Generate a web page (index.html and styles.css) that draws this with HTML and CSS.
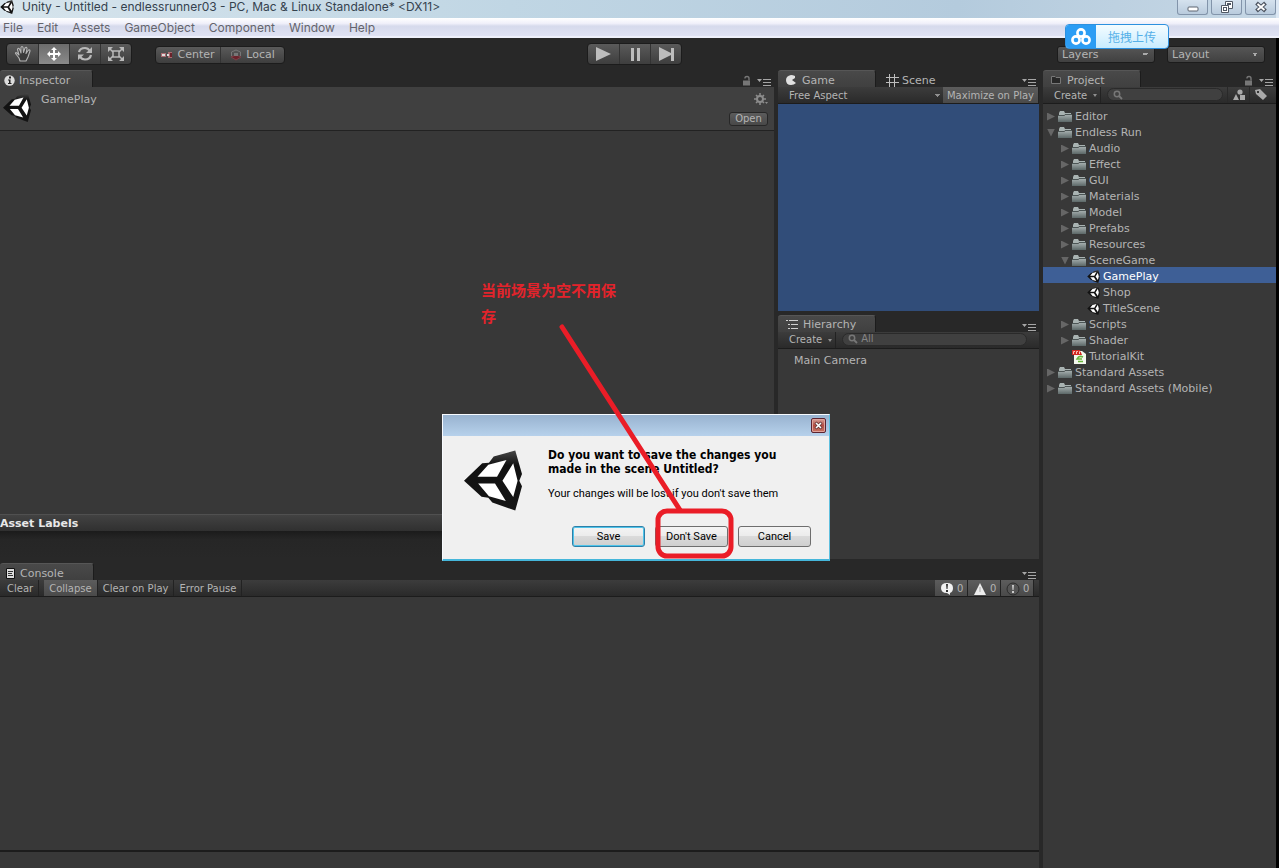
FILE: index.html
```html
<!DOCTYPE html>
<html lang="en">
<head>
<meta charset="utf-8">
<title>Unity - Untitled - endlessrunner03</title>
<link rel="stylesheet" href="styles.css">
</head>
<body>
<svg class="defs" aria-hidden="true">
  <defs>
    <linearGradient id="edge" x1="0" y1="0" x2="0" y2="1"><stop offset="0" stop-color="#484848"/><stop offset=".25" stop-color="#111"/><stop offset="1" stop-color="#151515"/></linearGradient>
    <linearGradient id="fold" x1="0" y1="0" x2="0" y2="1"><stop offset="0" stop-color="#a4adad"/><stop offset="1" stop-color="#5c6868"/></linearGradient>
    <symbol id="unity" viewBox="0 0 172 178">
      <path fill="url(#edge)" d="M0 90 54 38 74 36 88 18 152 0 172 70 164 90 172 106 152 178 84 154 72 140 52 137Z"/>
      <path fill="#fff" d="M40 78 72 42 126 28 98 78ZM42 98H92L124 150 74 136ZM146 38 159 90 146 138 114 90Z"/>
    </symbol>
    <symbol id="folder" viewBox="0 0 14 12">
      <path fill="#a9b3b2" d="M1 2 2 0H6L7 2H13V4H1Z"/><path fill="url(#fold)" d="M0 5H6L7 4H14V11H0Z"/><path fill="none" stroke="#4c5555" d="M0 4.500H6L7 3.500H14"/>
    </symbol>
    <symbol id="menu" viewBox="0 0 14 8">
      <path fill="#a6a6a6" d="M0 1H5L2.500 4ZM6 1H14V2H6ZM6 4H14V5H6ZM6 7H14V8H6Z"/>
    </symbol>
    <symbol id="lock" viewBox="0 0 9 10">
      <path fill="none" stroke="#777" stroke-width="1.400" d="M3 3V2.500Q3 1 5 1Q7 1 7 3V5"/><path fill="#777" d="M1 5H8V10H1Z"/>
    </symbol>
    <symbol id="find" viewBox="0 0 10 10">
      <circle cx="4" cy="4" r="2.700" fill="none" stroke="#777" stroke-width="1.500"/><path d="M6 6 9 9" stroke="#777" stroke-width="1.800"/>
    </symbol>
  </defs>
</svg>

<header class="titlebar">
  <svg class="app-icon"><use href="#unity"/></svg>
  <h1 class="title">Unity - Untitled - endlessrunner03 - PC, Mac &amp; Linux Standalone* &lt;DX11&gt;</h1>
  <div class="window-buttons">
    <button class="win-btn" aria-label="Minimize"><svg width="12" height="12" viewBox="0 0 12 12"><rect x="1" y="6" width="10" height="4" rx="1" fill="#fff" stroke="#5c6470"/></svg></button>
    <button class="win-btn" aria-label="Restore"><svg width="12" height="12" viewBox="0 0 12 12"><path fill="#fff" stroke="#505864" d="M4.500 .5H11.500V7.500H4.500Z"/><path fill="#fff" stroke="#505864" d="M.5 4.500H7.500V11.500H.5Z"/><path fill="#505864" d="M2 6H6V10H2ZM6 2H10V4H6Z"/><path fill="#fff" d="M3 7H5V9H3Z"/></svg></button>
    <button class="win-btn" aria-label="Close"><svg width="12" height="12" viewBox="0 0 12 12"><path d="M1.500 2 10.500 10M10.500 2 1.500 10" stroke="#4e5662" stroke-width="4"/><path d="M2.500 3 9.500 9M9.500 3 2.500 9" stroke="#fff" stroke-width="1.800"/></svg></button>
  </div>
</header>

<nav class="menubar">
  <button>File</button><button>Edit</button><button>Assets</button><button>GameObject</button><button>Component</button><button>Window</button><button>Help</button>
</nav>

<div class="editor">
  <div class="toolbar">
    <div class="group tools">
      <button aria-label="Hand"><svg width="18" height="18" viewBox="0 0 18 18"><path fill="#3b3b3b" stroke="#b5b5b5" stroke-width="1.100" stroke-linejoin="round" d="M6 16 5 13 1.500 8.500Q1.500 7 3 8L5 10 3.500 4.500Q4 2.500 5.500 4L7 8 7 2.500Q8 .5 9 2.500L9.500 7.500 11 3Q12.500 1.500 13 3.500L12 8.500 14.500 5Q16 4.500 16 6L14 12 12 16Z"/></svg></button>
      <button class="on" aria-label="Move"><svg width="18" height="18" viewBox="0 0 18 18"><path fill="#fff" d="M9 2 12 5H10V8H13V6L16 9 13 12V10H10V13H12L9 16 6 13H8V10H5V12L2 9 5 6V8H8V5H6Z"/></svg></button>
      <button aria-label="Rotate"><svg width="18" height="18" viewBox="0 0 18 18"><path fill="none" stroke="#b9b9b9" stroke-width="2.200" d="M3 7Q4 3 9 3Q12 3 14 6M15 10Q14 14.500 9 14.500Q6 14.500 4 12"/><path fill="#b9b9b9" d="M16 2V8H10ZM2 15V9.500H8Z"/></svg></button>
      <button aria-label="Scale"><svg width="18" height="18" viewBox="0 0 18 18"><path fill="#b9b9b9" d="M1 2H6L1 7ZM17 2V7L12 2ZM1 16V11L6 16ZM17 16H12L17 11Z"/><path stroke="#b9b9b9" stroke-width="1.500" d="M2 3 6 7M16 3 12 7M2 15 6 11M16 15 12 11"/><rect x="6" y="6" width="6" height="6" fill="#4a4a4a" stroke="#b9b9b9" stroke-width="1.500"/></svg></button>
    </div>
    <div class="group pivot">
      <button><svg width="12" height="10" viewBox="0 0 12 10"><path fill="#a96b71" d="M0 3H5V7H0ZM7 2H11V8H7Z"/><path fill="#ddd" d="M1 4H4V6H1ZM6 4H8V6H6Z"/><path fill="#6b222b" d="M9 3H11V7H9Z"/></svg>Center</button>
      <button><svg width="12" height="12" viewBox="0 0 12 12"><path fill="none" stroke="#777" d="M1.500 7V3L6 1 10.500 3V7"/><path fill="#6b222b" stroke="#7b4148" d="M1 8 6 6 11 8 6 11Z"/><path fill="#777" d="M4 4H8V7H4Z"/></svg>Local</button>
    </div>
    <div class="group play">
      <button aria-label="Play"><svg width="18" height="16" viewBox="0 0 18 16"><path fill="#bdbdbd" d="M2 1 17 8 2 15Z"/></svg></button>
      <button aria-label="Pause"><svg width="18" height="16" viewBox="0 0 18 16"><path fill="#bdbdbd" d="M5 2H8V15H5ZM11 2H14V15H11Z"/></svg></button>
      <button aria-label="Step"><svg width="18" height="16" viewBox="0 0 18 16"><path fill="#bdbdbd" d="M2 1 14 7V2H17V15H14V9L2 15Z"/></svg></button>
    </div>
    <div class="dropdowns">
      <select class="drop" aria-label="Layers"><option>Layers</option></select>
      <select class="drop" aria-label="Layout"><option>Layout</option></select>
    </div>
  </div>

  <div class="workspace">
    <main class="left">
      <div class="upper">
        <section class="panel inspector">
          <div class="tabs">
            <button class="tab active"><svg width="11" height="11" viewBox="0 0 11 11"><circle cx="5.500" cy="5.500" r="5.200" fill="#ddd"/><path fill="#222" d="M5 1.500H7V3.500H5ZM4 4.500H6.500V8H7.500V9H4V8H5V5.500H4Z"/></svg>Inspector</button>
            <span class="tab-tools"><svg class="i-lock"><use href="#lock"/></svg><svg class="i-menu"><use href="#menu"/></svg></span>
          </div>
          <div class="asset-head">
            <svg class="asset-icon"><use href="#unity"/></svg>
            <h2 class="asset-name">GamePlay</h2>
            <div class="asset-actions">
              <svg width="14" height="12" viewBox="0 0 14 12"><circle cx="6" cy="6" r="3" fill="none" stroke="#8c8c8c" stroke-width="2"/><path stroke="#8c8c8c" stroke-width="1.500" d="M6 0V3M6 9V12M0 6H3M9 6H12M2 2 4 4M8 8 10 10M10 2 8 4M2 10 4 8"/><path fill="#8c8c8c" d="M11 9H14L12.500 11Z"/></svg>
              <button class="open">Open</button>
            </div>
          </div>
          <div class="inspector-body"></div>
          <h2 class="labels-head">Asset Labels</h2>
          <div class="labels-body"></div>
        </section>

        <div class="views">
          <section class="panel game">
            <div class="tabs">
              <button class="tab active"><svg width="11" height="11" viewBox="0 0 11 11"><path fill="#e0e0e0" d="M9 1Q7 0 5 0Q0 1 0 5Q0 10 5 10Q8 10 10 8L6 5 9 3Z"/></svg>Game</button>
              <button class="tab scene-tab"><svg width="13" height="13" viewBox="0 0 13 13"><path stroke="#bdbdbd" d="M3.500 0V13M8.500 0V13M0 3.500H13M0 8.500H13"/></svg>Scene</button>
              <span class="tab-tools"><svg class="i-menu"><use href="#menu"/></svg></span>
            </div>
            <div class="strip">
              <select class="aspect" aria-label="Aspect ratio"><option>Free Aspect</option></select>
              <button class="strip-btn on">Maximize on Play</button>
            </div>
            <div class="viewport"></div>
          </section>
          <section class="panel hierarchy">
            <div class="tabs">
              <button class="tab active"><svg width="12" height="11" viewBox="0 0 12 11"><path fill="#d0d0d0" d="M0 1H2V2H0ZM3 1H12V2H3ZM2 5H4V6H2ZM5 5H12V6H5ZM2 9H4V10H2ZM5 9H12V10H5Z"/></svg>Hierarchy</button>
              <span class="tab-tools"><svg class="i-menu"><use href="#menu"/></svg></span>
            </div>
            <div class="strip">
              <button class="strip-btn create">Create</button>
              <label class="search"><svg class="i-find"><use href="#find"/></svg><input type="text" placeholder="All" aria-label="Search hierarchy"></label>
            </div>
            <ul class="scene-items"><li>Main Camera</li></ul>
          </section>
        </div>
      </div>

      <section class="panel console">
        <div class="tabs">
          <button class="tab active"><svg width="10" height="11" viewBox="0 0 10 11"><path fill="#ddd" stroke="#111" d="M.5 .5H8.500V10.500H.5Z"/><path stroke="#333" d="M2 3.500H7M2 5.500H6M2 7.500H7"/></svg>Console</button>
          <span class="tab-tools"><svg class="i-menu"><use href="#menu"/></svg></span>
        </div>
        <div class="strip">
          <button class="strip-btn clear">Clear</button>
          <button class="strip-btn on">Collapse</button>
          <button class="strip-btn">Clear on Play</button>
          <button class="strip-btn">Error Pause</button>
          <span class="counts">
            <button class="strip-btn on"><svg width="14" height="14" viewBox="0 0 14 14"><path fill="#f2f2f2" d="M7 1Q13 1 13 6Q13 10 10 11L10 13 7 11Q1 11 1 6Q1 1 7 1Z"/><path fill="#333" d="M6 2H8L7.500 7H6.500ZM6 8H8V10H6Z"/></svg>0</button>
            <button class="strip-btn on"><svg width="14" height="14" viewBox="0 0 14 14"><path fill="#ececec" d="M7 1 13 13H1Z"/><path fill="#aaa" d="M6.500 5H7.500V10H6.500Z"/></svg>0</button>
            <button class="strip-btn on"><svg width="14" height="14" viewBox="0 0 14 14"><circle cx="7" cy="7" r="6" fill="#555" stroke="#2b2b2b"/><path fill="#ccc" d="M6 3H8L7.500 8H6.500ZM6 9H8V11H6Z"/></svg>0</button>
          </span>
        </div>
        <div class="log"></div>
        <div class="log-detail"></div>
      </section>
    </main>

    <aside class="panel project">
      <div class="tabs">
        <button class="tab active"><svg width="11" height="10" viewBox="0 0 11 10"><path fill="#282828" stroke="#777" d="M.5 1.500H4L5 2.500H9.500V8.500H.5Z"/></svg>Project</button>
        <span class="tab-tools"><svg class="i-lock"><use href="#lock"/></svg><svg class="i-menu"><use href="#menu"/></svg></span>
      </div>
      <div class="strip">
        <button class="strip-btn create">Create</button>
        <label class="search"><svg class="i-find"><use href="#find"/></svg><input type="text" aria-label="Search project"></label>
        <button class="strip-icon" aria-label="Filter by type"><svg width="12" height="12" viewBox="0 0 12 12"><path fill="#aaa" d="M0 11 3 5 6 11ZM7 6H12V11H7Z"/><circle cx="7" cy="3" r="2.600" fill="#aaa"/></svg></button>
        <button class="strip-icon" aria-label="Filter by label"><svg width="12" height="12" viewBox="0 0 12 12"><path fill="#aaa" fill-rule="evenodd" d="M0 1 5 0 12 7 8 11 1 5ZM2 2V4H4V2Z"/></svg></button>
      </div>
      <ul class="tree">
        <li class="row"><i class="arrow"></i><svg class="i-folder"><use href="#folder"/></svg>Editor</li>
        <li class="row"><i class="arrow open-arrow"></i><svg class="i-folder"><use href="#folder"/></svg>Endless Run</li>
        <li class="row d1"><i class="arrow"></i><svg class="i-folder"><use href="#folder"/></svg>Audio</li>
        <li class="row d1"><i class="arrow"></i><svg class="i-folder"><use href="#folder"/></svg>Effect</li>
        <li class="row d1"><i class="arrow"></i><svg class="i-folder"><use href="#folder"/></svg>GUI</li>
        <li class="row d1"><i class="arrow"></i><svg class="i-folder"><use href="#folder"/></svg>Materials</li>
        <li class="row d1"><i class="arrow"></i><svg class="i-folder"><use href="#folder"/></svg>Model</li>
        <li class="row d1"><i class="arrow"></i><svg class="i-folder"><use href="#folder"/></svg>Prefabs</li>
        <li class="row d1"><i class="arrow"></i><svg class="i-folder"><use href="#folder"/></svg>Resources</li>
        <li class="row d1"><i class="arrow open-arrow"></i><svg class="i-folder"><use href="#folder"/></svg>SceneGame</li>
        <li class="row d2 selected"><svg class="i-scene"><use href="#unity"/></svg>GamePlay</li>
        <li class="row d2"><svg class="i-scene"><use href="#unity"/></svg>Shop</li>
        <li class="row d2"><svg class="i-scene"><use href="#unity"/></svg>TitleScene</li>
        <li class="row d1"><i class="arrow"></i><svg class="i-folder"><use href="#folder"/></svg>Scripts</li>
        <li class="row d1"><i class="arrow"></i><svg class="i-folder"><use href="#folder"/></svg>Shader</li>
        <li class="row file"><svg width="14" height="14" viewBox="0 0 14 14"><path fill="#f4f8ee" d="M2 1H10L14 4V14H2Z"/><path fill="#d22a22" d="M0 0H8L10 5H0Z"/><path fill="none" stroke="#f5c4bc" d="M1.500 4V1.500H3M4.500 4V1.500H6M7.500 4V1.500H9"/><path fill="none" stroke="#69b53c" stroke-width="1.600" d="M11 7Q7 5 5 9H10M6 11.500H11"/></svg>TutorialKit</li>
        <li class="row"><i class="arrow"></i><svg class="i-folder"><use href="#folder"/></svg>Standard Assets</li>
        <li class="row"><i class="arrow"></i><svg class="i-folder"><use href="#folder"/></svg>Standard Assets (Mobile)</li>
      </ul>
    </aside>
  </div>
</div>

<button class="upload"><span class="upload-icon"><svg width="20" height="18" viewBox="0 0 20 18"><g fill="none" stroke="#fff" stroke-width="2.600"><circle cx="10" cy="5" r="3.600"/><circle cx="5" cy="12" r="3.600"/><circle cx="15" cy="12" r="3.600"/></g></svg></span><span class="upload-text">拖拽上传</span></button>

<div class="dialog" role="dialog" aria-label="Save changes">
  <div class="dialog-bar"><button class="dialog-close" aria-label="Close"><svg width="9" height="9" viewBox="0 0 9 9"><path d="M1.500 1.500 7.500 7.500M7.500 1.500 1.500 7.500" stroke="#5e3436" stroke-width="3"/><path d="M2 2 7 7M7 2 2 7" stroke="#fff" stroke-width="1.600"/></svg></button></div>
  <div class="dialog-body">
    <svg class="dialog-icon"><use href="#unity"/></svg>
    <div class="dialog-text">
      <h2>Do you want to save the changes you<br>made in the scene Untitled?</h2>
      <p>Your changes will be lost if you don't save them</p>
    </div>
  </div>
  <div class="dialog-actions">
    <button class="dlg-btn default">Save</button><button class="dlg-btn">Don't Save</button><button class="dlg-btn">Cancel</button>
  </div>
</div>

<p class="note">当前场景为空不用保存</p>
<svg class="marks" width="260" height="250" viewBox="480 315 260 250" aria-hidden="true"><g fill="none" stroke="#ea1d27" stroke-width="5" stroke-linecap="round"><path d="M562 327 680 510"/><rect x="658" y="511" width="73" height="45" rx="9"/></g></svg>
</body>
</html>
```
FILE: styles.css
```css
* { box-sizing: border-box; }
html, body { height: 100%; margin: 0; }
body {
  position: relative;
  display: flex;
  flex-direction: column;
  overflow: hidden;
  background: #282828;
  color: #b4b4b4;
  font: 11px/16px "DejaVu Sans", sans-serif;
}
h1, h2, p, ul { margin: 0; padding: 0; font: inherit; list-style: none; }
button, select, input { margin: 0; padding: 0; border: 0; background: none; color: inherit; font: inherit; }
select { appearance: none; }
svg { display: block; flex: none; }
.defs { position: absolute; width: 0; height: 0; }

.titlebar {
  display: flex;
  align-items: flex-start;
  flex: none;
  height: 18px;
  gap: 8px;
  background: linear-gradient(90deg, #d6e4ec, #c0d6e4 40%, #b4cbdd 75%, #c6d7e5);
  border-right: 3px solid #dce8f4;
}
.app-icon { width: 14px; height: 14px; }
.title { flex: 1; color: #35424e; font: 12px/14px Inter, sans-serif; white-space: nowrap; }
.window-buttons { display: flex; gap: 3px; }
.win-btn {
  display: grid;
  place-items: center;
  width: 31px;
  height: 15px;
  border: 1px solid #8294aa;
  border-top: 0;
  border-radius: 0 0 3px 3px;
  background: linear-gradient(#d5e2ee, #b9cbdd);
}

.menubar {
  display: flex;
  flex: none;
  gap: 14px;
  height: 20px;
  padding: 0 3px;
  background: linear-gradient(#fff, #f0f0fa 30%, #d6daec 45%, #dfe2f3);
  border-bottom: 2px solid #eef0fa;
  color: #64646c;
  font: 12px/20px Inter, sans-serif;
}

.editor { display: flex; flex-direction: column; flex: 1; min-height: 0; border-right: 3px solid #000; }
.toolbar { position: relative; display: flex; align-items: center; flex: none; height: 32px; padding: 0 11px 0 6px; }
.group { display: flex; border-radius: 4px; border: 1px solid #1c1c1c; background: linear-gradient(#5a5a5a, #3e3e3e); }
.group button { display: flex; align-items: center; justify-content: center; gap: 4px; }
.group button + button { border-left: 1px solid #333; }
.tools button { width: 31px; height: 20px; }
.tools button.on { background: linear-gradient(#6c6c6c, #8a8a8a); }
.pivot { margin: 2px 0 0 23px; }
.pivot button { width: 64px; height: 16px; }
.play { position: absolute; left: 46%; }
.play button { width: 31px; height: 20px; }
.dropdowns { display: flex; gap: 12px; margin-left: auto; }
.drop, .aspect {
  background-image: conic-gradient(from -45deg at 50% 100%, #aaa 90deg, #0000 0), linear-gradient(#565656, #404040);
  background-size: 7px 4px, auto;
  background-position: right 6px center, 0 0;
  background-repeat: no-repeat;
}
.drop, .aspect {
  background-image: linear-gradient(to bottom left, #aaa 50%, #0000 50%), linear-gradient(to bottom right, #aaa 50%, #0000 50%), linear-gradient(#565656, #404040);
  background-image: linear-gradient(to top right, #0000 50%, #aaa 50%), linear-gradient(to top left, #0000 50%, #aaa 50%), linear-gradient(#565656, #404040);
  background-size: 3px 3px, 3px 3px, auto;
  background-position: right 9px center, right 6px center, 0 0;
}
.drop { width: 98px; height: 17px; padding-left: 4px; border: 1px solid #1c1c1c; border-radius: 3px; }

.workspace { display: grid; grid-template-columns: 1fr 233px; gap: 4px; flex: 1; min-height: 0; }
.left { display: flex; flex-direction: column; gap: 4px; min-width: 0; min-height: 0; }
.upper { display: grid; grid-template-columns: 1fr 261px; gap: 4px; flex: 490 0 0; min-height: 0; }
.panel { display: flex; flex-direction: column; min-height: 0; min-width: 0; background: #383838; }
.tabs { display: flex; flex: none; height: 17px; background: #282828; }
.tab { display: flex; align-items: center; gap: 5px; height: 17px; min-width: 98px; padding: 2px 8px 0; border-top: 1px solid transparent; border-radius: 3px 3px 0 0; text-align: left; line-height: 15px; }
.tab.active { background: linear-gradient(#494949, #404040); border-top-color: #565656; border-right: 1px solid #1c1c1c; }
.inspector .tab { min-width: 93px; padding-left: 4px; gap: 4px; }
.console .tab { min-width: 94px; padding-left: 6px; gap: 4px; }
.scene-tab { padding-left: 10px; gap: 3px; }
.tab-tools { display: flex; align-items: flex-end; gap: 6px; margin-left: auto; padding: 0 3px 1px 0; }
.i-menu { width: 14px; height: 8px; }
.i-lock { width: 9px; height: 11px; }
.i-find { width: 10px; height: 10px; }
.i-folder { width: 14px; height: 12px; }
.i-scene { width: 13px; height: 13px; }

.asset-head { display: flex; flex: none; height: 44px; padding: 3px 6px 3px 3px; gap: 10px; background: #404040; border-bottom: 1px solid #222; }
.asset-icon { width: 28px; height: 29px; margin-top: 3px; }
.asset-name { flex: 1; line-height: 20px; }
.asset-actions { display: flex; flex-direction: column; align-items: flex-end; gap: 7px; padding-top: 3px; }
.open { width: 39px; height: 14px; border: 1px solid #272727; border-radius: 3px; background: linear-gradient(#5c5c5c, #484848); font-size: 10px; line-height: 12px; }
.inspector-body { flex: 1; }
.labels-head { flex: none; height: 17px; border-top: 1px solid #505050; background: linear-gradient(#424242, #303030); color: #e8e8e8; font-weight: bold; line-height: 17px; }
.labels-body { flex: none; height: 28px; background: linear-gradient(#1b1b1b, #262626 30%, #282828); }

.views { display: flex; flex-direction: column; gap: 4px; min-height: 0; min-width: 0; }
.game { flex: 241 0 0; }
.hierarchy { flex: 245 0 0; }
.strip { display: flex; align-items: stretch; flex: none; height: 17px; background: linear-gradient(#3c3c3c, #2a2a2a); border-bottom: 1px solid #1c1c1c; font-size: 10px; }
.strip-btn { display: flex; align-items: center; gap: 3px; padding: 1px 4px 0; border-right: 1px solid #222; white-space: nowrap; }
.strip-btn.on { background: linear-gradient(#5c5c5c, #4a4a4a); }
.aspect {
  flex: 1;
  min-width: 0;
  padding: 1px 0 0 11px;
  background-image: conic-gradient(from -45deg at 50% 100%, #8f8f8f 90deg, #0000 0), linear-gradient(#3c3c3c, #2a2a2a);
  background-size: 5px 3px, auto;
  background-position: right 3px center, 0 0;
}
.viewport { flex: 1; background: #314d79; }
.create { gap: 6px; padding: 1px 3px 0 11px; }
.create::after { content: ""; border: 2px solid transparent; border-top: 3px solid #8f8f8f; border-bottom: 0; }
.search { display: flex; align-items: center; flex: 1; gap: 3px; min-width: 0; margin: 1px 12px 2px 6px; padding: 0 5px; border: 1px solid #2a2a2a; border-radius: 8px; background: #404040; }
.search input { flex: 1; min-width: 0; width: 0; height: 12px; }
.search input::placeholder { color: #858585; opacity: 1; }
.project .search { margin-right: 4px; }
.strip-icon { display: grid; place-items: center; width: 22px; border-left: 1px solid #292929; }
.project .strip { padding-right: 5px; }
.scene-items { padding: 4px 16px; }

.console { flex: 305 0 0; }
.console .strip-btn { padding: 1px 5px 0; }
.console .clear { padding-left: 7px; margin-right: 5px; }
.counts { display: flex; margin-left: auto; padding-right: 5px; }
.counts .strip-btn { width: 33px; }
.log { flex: 1; border-bottom: 2px solid #1c1c1c; }
.log-detail { flex: none; height: 16px; }

.tree { padding-top: 3px; }
.row { display: flex; align-items: center; gap: 3px; height: 16px; padding: 3px 0 0 4px; white-space: nowrap; }
.row.d1 { padding-left: 18px; }
.row.d2 { padding-left: 44px; }
.row.file { padding-left: 29px; }
.selected { background: #3e5f96; color: #fff; }
.arrow { width: 8px; height: 8px; background: #666; clip-path: polygon(0 0, 100% 50%, 0 100%); }
.open-arrow { clip-path: polygon(0 0, 100% 0, 50% 100%); }

.upload { position: absolute; top: 24px; right: 110px; display: flex; width: 104px; height: 25px; border: 1px solid #2d91df; border-radius: 4px; overflow: hidden; background: linear-gradient(#f4fcff, #c8ecff); }
.upload-icon { display: grid; place-items: center; width: 30px; height: 23px; background: #2c9df4; }
.upload-text { flex: 1; color: #55b0e8; font: 12px/23px "Noto Sans CJK SC", sans-serif; }

.dialog { position: absolute; left: 442px; top: 414px; display: flex; flex-direction: column; width: 388px; height: 147px; border: 1px solid #f8fbff; border-right-color: #5fc0df; border-bottom: 2px solid #45b6da; background: #f0f0f0; color: #000; font: 11px/14px Roboto, sans-serif; }
.dialog-bar { display: flex; align-items: flex-start; justify-content: flex-end; height: 21px; padding: 3px 3px 0; background: linear-gradient(#98b3d0, #b7d1eb); }
.dialog-close { display: grid; place-items: center; width: 15px; height: 15px; border: 1px solid #5c2430; border-radius: 2px; background: linear-gradient(#d9a49b, #b44c42 50%, #c87564); box-shadow: inset 0 0 0 1px #dfa39c; }
.dialog-body { display: flex; gap: 26px; padding: 12px 20px 0 21px; }
.dialog-icon { width: 58px; height: 61px; margin-top: 2px; }
.dialog-text h2 { font: bold 12px/14px "DejaVu Sans Condensed", sans-serif; white-space: nowrap; }
.dialog-text p { padding-top: 11px; white-space: nowrap; }
.dialog-actions { display: flex; justify-content: flex-end; gap: 10px; margin-top: 15px; padding-right: 18px; }
.dlg-btn { width: 73px; height: 21px; border: 1px solid #6e6e6e; border-radius: 3px; background: linear-gradient(#f4f4f4, #ebebeb 50%, #dadada 50%, #cfcfcf); }
.dlg-btn.default { border-color: #2d7fa8; box-shadow: inset 0 0 0 1px #4fc4ea; }

.note { position: absolute; left: 481px; top: 277px; width: 136px; color: #e3232b; font: bold 15px/26px "Noto Sans CJK SC", sans-serif; }
.marks { position: absolute; left: 480px; top: 315px; }
```
